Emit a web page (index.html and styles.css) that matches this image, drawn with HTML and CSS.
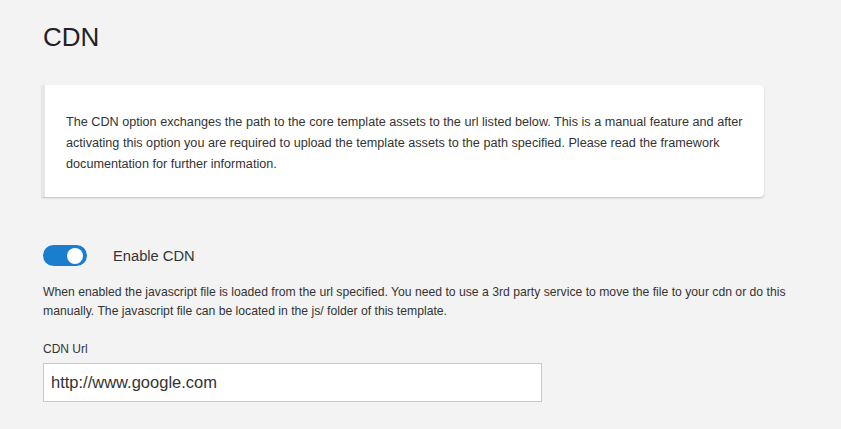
FILE: index.html
```html
<!DOCTYPE html>
<html>
<head>
<meta charset="utf-8">
<link rel="stylesheet" href="styles.css">
</head>
<body>
<main class="page">
  <h1 class="title">CDN</h1>
  <div class="notice">
    <p>The CDN option exchanges the path to the core template assets to the url listed below. This is a manual feature and after activating this option you are required to upload the template assets to the path specified. Please read the framework documentation for further information.</p>
  </div>
  <div class="toggle-row">
    <span class="switch"><span class="knob"></span></span>
    <span class="toggle-label">Enable CDN</span>
  </div>
  <p class="desc">When enabled the javascript file is loaded from the url specified. You need to use a 3rd party service to move the file to your cdn or do this manually. The javascript file can be located in the js/ folder of this template.</p>
  <label class="field-label">CDN Url</label>
  <div class="input">http://www.google.com</div>
</main>
</body>
</html>
```

FILE: styles.css
```css
html, body {
  margin: 0;
  padding: 0;
  background: #f3f3f3;
}
body {
  font-family: "Liberation Sans", Arial, sans-serif;
  color: #333;
}
.page {
  padding: 0 0 0 43px;
  display: flex;
  flex-direction: column;
  align-items: flex-start;
}
.title {
  margin: 22px 0 0 0;
  font-size: 26px;
  line-height: 30px;
  font-weight: normal;
  color: #222;
}
.notice {
  margin: 33px 0 0 -1px;
  width: 680px;
  background: #fff;
  border-left: 3px solid #e6e6e6;
  border-radius: 0 4px 4px 0;
  box-shadow: 0 1px 2px rgba(0,0,0,0.22);
  padding: 27px 18px 22px 21px;
}
.notice p {
  margin: 0;
  font-size: 12.65px;
  line-height: 21px;
  color: #333;
}
.toggle-row {
  margin-top: 48px;
  display: flex;
  align-items: center;
  gap: 26px;
}
.switch {
  width: 44px;
  height: 21px;
  border-radius: 11px;
  background: #1b7dd0;
  display: flex;
  align-items: center;
  justify-content: flex-end;
  padding-right: 4px;
  box-sizing: border-box;
}
.knob {
  width: 16px;
  height: 16px;
  border-radius: 50%;
  background: #fff;
}
.toggle-label {
  font-size: 14.7px;
  color: #333;
}
.desc {
  margin: 17px 0 0 0;
  font-size: 12.2px;
  line-height: 19px;
  width: 780px;
  color: #333;
}
.field-label {
  margin-top: 20px;
  font-size: 12px;
  line-height: 16px;
  color: #333;
}
.input {
  margin-top: 6px;
  width: 499px;
  height: 39px;
  box-sizing: border-box;
  background: #fff;
  border: 1px solid #c8c8c8;
  padding: 0 7px;
  display: flex;
  align-items: center;
  font-size: 16.5px;
  color: #333;
}
```
